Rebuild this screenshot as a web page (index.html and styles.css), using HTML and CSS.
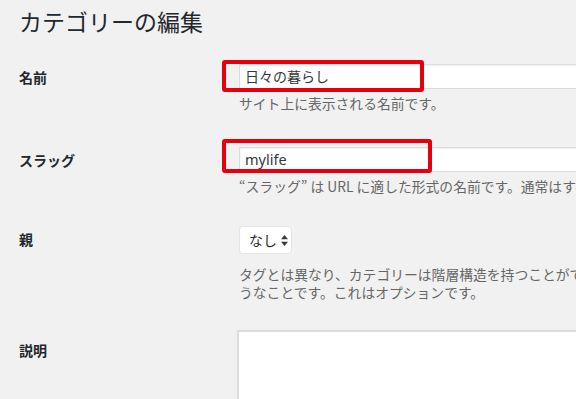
FILE: index.html
```html
<!DOCTYPE html>
<html lang="ja">
<head>
<meta charset="utf-8">
<title>カテゴリーの編集</title>
<link rel="stylesheet" href="styles.css">
</head>
<body>
<div class="wrap">
  <h1 class="title">カテゴリーの編集</h1>
  <div class="form">
    <div class="row row-name">
      <div class="label">名前</div>
      <div class="field">
        <div class="input input-name">日々の暮らし</div>
        <p class="desc">サイト上に表示される名前です。</p>
        <div class="mark mark-name"></div>
      </div>
    </div>
    <div class="row row-slug">
      <div class="label">スラッグ</div>
      <div class="field">
        <div class="input input-slug">mylife</div>
        <p class="desc">“スラッグ” は URL に適した形式の名前です。通常はすべて半角小文字で、英数字とハイフンのみが使われます。</p>
        <div class="mark mark-slug"></div>
      </div>
    </div>
    <div class="row row-parent">
      <div class="label">親</div>
      <div class="field">
        <div class="select"><span>なし</span><svg class="arrows" width="7" height="11" viewBox="0 0 7 11"><path d="M3.5 0 L7 4.2 L0 4.2 Z M3.5 11 L7 6.8 L0 6.8 Z" fill="#3a3a3a"/></svg></div>
        <p class="desc desc-long">タグとは異なり、カテゴリーは階層構造を持つことができます。たとえば、ジャズというカテゴリーの下にビバップやビッグバンドという子カテゴリーを作る、といったようなことです。これはオプションです。</p>
      </div>
    </div>
    <div class="row row-desc">
      <div class="label">説明</div>
      <div class="field">
        <div class="textarea"></div>
      </div>
    </div>
  </div>
</div>
</body>
</html>
```
FILE: styles.css
```css
html, body {
  margin: 0;
  padding: 0;
  background: #f1f1f1;
  overflow: hidden;
}
body {
  font-family: "Noto Sans CJK JP", "Noto Sans", sans-serif;
  color: #23282d;
  width: 576px;
  height: 399px;
}
.wrap {
  padding-left: 19px;
  width: 1400px;
}
.title {
  margin: 0;
  padding: 6px 0 4px;
  font-size: 23px;
  font-weight: 400;
  line-height: 30px;
  color: #23282d;
}
.form {
  margin-top: 9px;
}
.row {
  display: flex;
}
.label {
  width: 220px;
  flex: none;
  box-sizing: border-box;
  padding-top: 19px;
  font-size: 14px;
  font-weight: 700;
  line-height: 18px;
  color: #23282d;
}
.field {
  position: relative;
  padding-top: 15px;
  padding-bottom: 15px;
}
.input {
  box-sizing: border-box;
  width: 350px;
  height: 25px;
  border: 1px solid #dcdcdc;
  background: #fff;
  box-shadow: inset 0 1px 2px rgba(0,0,0,.07);
  padding: 0 5px;
  font-size: 14px;
  line-height: 23px;
  color: #32373c;
}
.input-slug {
  font-family: "Noto Sans", "Noto Sans CJK JP", sans-serif;
  font-size: 14.5px;
}
.desc {
  margin: 5px 0 4px;
  font-size: 13.8px;
  line-height: 19px;
  color: #666;
  white-space: nowrap;
}
.row-slug .desc {
  margin-bottom: 0;
}
.desc-long {
  white-space: normal;
  width: 1064px;
  line-height: 18px;
  margin: 11px 0 0;
}
.row-parent .field {
  padding-bottom: 14px;
}
.row-desc .label {
  padding-top: 26px;
}
.row-desc .field {
  margin-left: -2px;
}
.mark {
  position: absolute;
  box-sizing: border-box;
  border: 4px solid #e5000c;
  border-radius: 3px;
  left: -17px;
}
.mark-name {
  top: 11px;
  width: 202px;
  height: 32px;
}
.mark-slug {
  top: 7px;
  width: 210px;
  height: 34px;
}
.select {
  box-sizing: border-box;
  display: inline-flex;
  align-items: center;
  gap: 4px;
  width: 53px;
  height: 28px;
  padding: 0 0 0 9px;
  background: #fff;
  border: 1px solid #e4e4e4;
  border-radius: 4px;
  font-size: 14px;
  color: #23282d;
}
.arrows {
  margin-top: 1px;
}
.textarea {
  box-sizing: border-box;
  width: 600px;
  height: 120px;
  border: 1px solid #dcdcdc;
  border-width: 2px 0 0 2px;
  background: #fff;
}
```
